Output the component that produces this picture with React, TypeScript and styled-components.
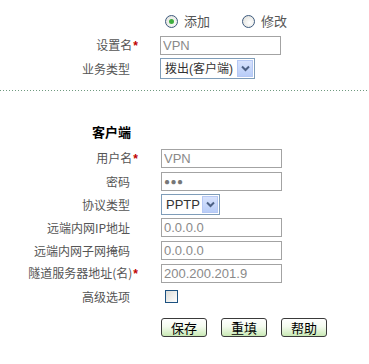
import React from "react";
import styled, { createGlobalStyle } from "styled-components";

const GlobalStyle = createGlobalStyle`
  html, body {
    margin: 0;
    padding: 0;
    background: #ffffff;
  }
  body {
    font-family: "Noto Sans CJK SC", "Liberation Sans", sans-serif;
    font-size: 12px;
    color: #444;
  }
`;

const Page = styled.div`
  width: 369px;
  height: 364px;
  overflow: hidden;
  background: #fff;
`;

const Section = styled.div<{ $top: number }>`
  display: flex;
  flex-direction: column;
  padding-top: ${(p) => p.$top}px;
`;

const Row = styled.div<{ $h?: number; $mt?: number }>`
  display: flex;
  align-items: center;
  height: ${(p) => p.$h ?? 23}px;
  margin-top: ${(p) => p.$mt ?? 0}px;
`;

const Label = styled.div<{ $w: number }>`
  width: ${(p) => p.$w}px;
  box-sizing: border-box;
  padding-right: ${(p) => p.$w - 130}px;
  text-align: right;
  font-size: 12px;
  line-height: 16px;
  color: #555;
  white-space: nowrap;
`;

const Star = styled.span`
  color: #c00000;
  font-family: "Liberation Sans", sans-serif;
  font-weight: bold;
  font-size: 12px;
  margin-right: -8px;
  margin-left: 1px;
`;

const Title = styled.div`
  width: 131px;
  text-align: right;
  font-size: 13px;
  line-height: 16px;
  font-weight: bold;
  color: #000;
`;

const TextInput = styled.input<{ $dots?: boolean }>`
  width: 121px;
  height: 19px;
  box-sizing: border-box;
  border: 1px solid #a3a3a3;
  padding: 0 2px;
  margin: 0;
  font-family: "Liberation Sans", "DejaVu Sans", sans-serif;
  font-size: ${(p) => (p.$dots ? 10 : 13)}px;
  letter-spacing: ${(p) => (p.$dots ? 0.5 : 0)}px;
  color: ${(p) => (p.$dots ? "#777" : "#8a8a8a")};
  background: #fff;
  outline: none;
`;

const Select = styled.div<{ $w: number }>`
  width: ${(p) => p.$w}px;
  height: 21px;
  box-sizing: border-box;
  border: 1px solid #7f9db9;
  display: flex;
  align-items: center;
  justify-content: space-between;
  padding: 1px 1px 1px 4px;
  background: #fff;
`;

const SelectValue = styled.span<{ $cjk?: boolean }>`
  font-family: "Liberation Sans", "Noto Sans CJK SC", sans-serif;
  font-size: ${(p) => (p.$cjk ? 12 : 13)}px;
  line-height: 16px;
  color: #333;
  white-space: nowrap;
`;

const ArrowBox = styled.span`
  width: 16px;
  height: 17px;
  box-sizing: border-box;
  border: 1px solid #b6c8f4;
  background: linear-gradient(#d8e3fd, #b9cdf8);
  display: flex;
  align-items: center;
  justify-content: center;
`;

const RadioGroup = styled.div`
  display: flex;
  align-items: center;
  padding-left: 5px;
`;

const RadioItem = styled.label<{ $w: number }>`
  display: flex;
  align-items: center;
  gap: 6px;
  width: ${(p) => p.$w}px;
  font-size: 13px;
  line-height: 16px;
  color: #555;
`;

const RadioCircle = styled.span<{ $on?: boolean }>`
  width: 13px;
  height: 13px;
  box-sizing: border-box;
  border-radius: 50%;
  border: 1px solid #3d5a7e;
  background: radial-gradient(circle at 60% 60%, #ffffff, #dcdcd6);
  display: flex;
  align-items: center;
  justify-content: center;
  &::after {
    content: "";
    width: 5px;
    height: 5px;
    border-radius: 50%;
    background: ${(p) => (p.$on ? "#3fae3f" : "transparent")};
  }
`;

const CheckBox = styled.span`
  margin-left: 4px;
  width: 13px;
  height: 13px;
  box-sizing: border-box;
  border: 1px solid #1c5180;
  background: linear-gradient(135deg, #dcdcd7, #ffffff);
`;

const Divider = styled.div`
  height: 1px;
  margin-top: 10px;
  width: 369px;
  background: repeating-linear-gradient(
    to right,
    #6f9a80 0 1px,
    transparent 1px 3px
  );
`;

const Buttons = styled.div`
  display: flex;
  gap: 14px;
  padding-left: 161px;
  margin-top: 10px;
`;

const Button = styled.button`
  width: 46px;
  height: 19px;
  box-sizing: border-box;
  border: 1px solid #3a3a3a;
  border-radius: 3px;
  background: linear-gradient(#ffffff 0%, #f4fbef 45%, #c9e9b4 100%);
  font-family: "Noto Sans CJK SC", sans-serif;
  font-size: 13px;
  line-height: 15px;
  color: #000;
  padding: 0;
  display: flex;
  align-items: center;
  justify-content: center;
`;

const Chevron = () => (
  <svg width="9" height="7" viewBox="0 0 9 7">
    <path d="M1 1.5 L4.5 5 L8 1.5" fill="none" stroke="#4d6185" strokeWidth="2" />
  </svg>
);

const FakeSelect: React.FC<{ width: number; value: string; cjk?: boolean }> = ({
  width,
  value,
  cjk,
}) => (
  <Select $w={width}>
    <SelectValue $cjk={cjk}>{value}</SelectValue>
    <ArrowBox>
      <Chevron />
    </ArrowBox>
  </Select>
);

const clientRows: { label: string; value: string; star?: boolean }[] = [
  { label: "远端内网IP地址", value: "0.0.0.0" },
  { label: "远端内网子网掩码", value: "0.0.0.0" },
  { label: "隧道服务器地址(名)", value: "200.200.201.9", star: true },
];

export default function App() {
  return (
    <Page>
      <GlobalStyle />
      <Section $top={10}>
        <Row $h={22}>
          <Label $w={160} />
          <RadioGroup>
            <RadioItem $w={77}>
              <RadioCircle $on />
              添加
            </RadioItem>
            <RadioItem $w={60}>
              <RadioCircle />
              修改
            </RadioItem>
          </RadioGroup>
        </Row>
        <Row $mt={2}>
          <Label $w={160}>
            设置名<Star>*</Star>
          </Label>
          <TextInput readOnly defaultValue="VPN" />
        </Row>
        <Row>
          <Label $w={160}>业务类型</Label>
          <FakeSelect width={95} value="拨出(客户端)" cjk />
        </Row>
      </Section>
      <Divider />
      <Section $top={30}>
        <Row $h={22}>
          <Title>客户端</Title>
        </Row>
        <Row $mt={4}>
          <Label $w={161}>
            用户名<Star>*</Star>
          </Label>
          <TextInput readOnly defaultValue="VPN" />
        </Row>
        <Row>
          <Label $w={161}>密码</Label>
          <TextInput readOnly $dots defaultValue="●●●" />
        </Row>
        <Row>
          <Label $w={161}>协议类型</Label>
          <FakeSelect width={59} value="PPTP" />
        </Row>
        {clientRows.map((r) => (
          <Row key={r.label}>
            <Label $w={161}>
              {r.label}
              {r.star && <Star>*</Star>}
            </Label>
            <TextInput readOnly defaultValue={r.value} />
          </Row>
        ))}
        <Row>
          <Label $w={161}>高级选项</Label>
          <CheckBox />
        </Row>
      </Section>
      <Buttons>
        <Button>保存</Button>
        <Button>重填</Button>
        <Button>帮助</Button>
      </Buttons>
    </Page>
  );
}
